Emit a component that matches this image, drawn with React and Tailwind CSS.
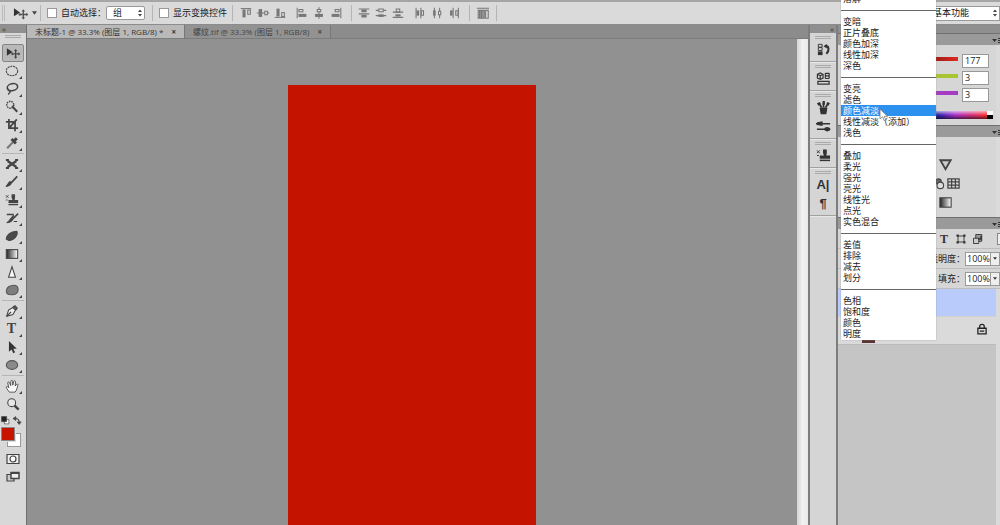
import { useState } from 'react';

const MODES = [
  ['溶解'],
  ['变暗', '正片叠底', '颜色加深', '线性加深', '深色'],
  ['变亮', '滤色', '颜色减淡', '线性减淡（添加）', '浅色'],
  ['叠加', '柔光', '强光', '亮光', '线性光', '点光', '实色混合'],
  ['差值', '排除', '减去', '划分'],
  ['色相', '饱和度', '颜色', '明度'],
];

const Icon = ({ children, className = 'size-4' }) => (
  <svg viewBox="0 0 16 16" className={className} fill="none" stroke="currentColor" strokeWidth="1.2">{children}</svg>
);

const moveIcon = (
  <>
    <path d="M1 2.500v8.500l6.500-4.200z" fill="#333" stroke="none" />
    <path d="M11 5v8M7 9h8" strokeWidth="1.5" />
    <path d="M11 3.500l1.900 2.300H9.100zM11 14.500l1.900-2.300H9.100zM5.500 9l2.300-1.900v3.800zM16.500 9l-2.300-1.900v3.800z" fill="currentColor" stroke="none" />
  </>
);

const stampIcon = (
  <>
    <path d="M1 2.500l3 3M4 2.500l-3 3M1 8h2" strokeWidth="1" />
    <path d="M7.500 1.500h4v4L11 8h4v3.500H4V8h4.500l-1-2.500z" fill="currentColor" stroke="none" />
    <path d="M4 13.200h11" strokeWidth="1.6" />
  </>
);

const TOOLS = [
  [
    { name: '移动', icon: moveIcon, active: true },
    { name: '椭圆选框', icon: <ellipse cx="8" cy="8" rx="6.500" ry="5.500" strokeDasharray="2.4 0.8" /> },
    { name: '套索', icon: <><ellipse cx="8.500" cy="6" rx="6" ry="4" strokeWidth="1.8" transform="rotate(-12 8 6)" /><path d="M4 8c-1 1 0 2.500 1.500 2S5.500 13 3.500 14" strokeWidth="1.6" /></> },
    { name: '快速选择', icon: <><circle cx="6" cy="5.500" r="4" strokeDasharray="1.8 1" strokeWidth="1.6" /><path d="M8 7l6 6.500" strokeWidth="2.4" /></> },
    { name: '裁剪', icon: <path d="M4.500 1v10.500h10.500M1 4.500h10.500V15M5 11l8.500-9.500" strokeWidth="2" /> },
    { name: '吸管', icon: <><path d="M9 7l-6.500 7" strokeWidth="2.400" stroke="#777" /><path d="M7.500 3.500l5 5M10 6l3.500-3.500" strokeWidth="3.4" /></> },
  ],
  [
    { name: '修复画笔', icon: <><path d="M3 4.500l10 7M3 11.500l10-7" strokeWidth="2.800" /><path d="M1 3.500h3.500M1 12.500h3.500M11.500 3.500H15M11.500 12.500H15" strokeWidth="2.2" /></> },
    { name: '画笔', icon: <><path d="M14 1.500L7 9" strokeWidth="2" /><path d="M7.500 8.500c-1 3-3 4.500-6.500 4.500 2-1 2.500-4 4.500-5.500z" fill="currentColor" /></> },
    { name: '仿制图章', icon: stampIcon },
    { name: '历史记录画笔', icon: <><path d="M2 4h8M10 5L6 10M15 3L9 9" strokeWidth="1.8" /><path d="M9 9c-1 3-3 4-7 4.500 2-1 3-3 4.500-4.500zM10 12h4" fill="currentColor" /></> },
    { name: '橡皮擦', icon: <path d="M1.500 11.500c0-4.500 5-9 12-9 2 4-3 10.500-9 10.500z" fill="#4a4a4a" /> },
    { name: '渐变', icon: <><defs><linearGradient id="toolRamp"><stop stopColor="#222" /><stop offset="1" stopColor="#fff" /></linearGradient></defs><rect x="1.500" y="3" width="13" height="10" fill="url(#toolRamp)" /></> },
    { name: '锐化', icon: <path d="M8 2l4 12H4z" fill="#f5f5f5" strokeWidth="1.2" /> },
    { name: '海绵', icon: <path d="M1.500 9c0-4 4-6.500 8.500-6.500 3 0 5 2 5 5 0 4-3 6-7.500 6s-6-1.500-6-4.500z" fill="#7d7d7d" stroke="#555" /> },
  ],
  [
    { name: '钢笔', icon: <><path d="M2 14l2-7 5-3 3 3-3 5z" fill="#eee" /><path d="M2 14l5-5M9.500 2.500l4 4" strokeWidth="1.4" /><path d="M9 4l2.500-2L14 4.500 12 7" fill="#555" /></> },
    { name: '文字', text: 'T' },
    { name: '路径选择', icon: <path d="M4.500 1v12.500l3-2.700 2 4.200 2-.9-2-4.100H13.500z" fill="#333" stroke="none" /> },
    { name: '椭圆', icon: <ellipse cx="8" cy="8" rx="6.500" ry="5" fill="#8a8a8a" stroke="#555" /> },
  ],
  [
    { name: '抓手', icon: <path d="M5 15C3 12 1 10 1.500 9s2-.2 3 1L3 4.500c.3-1.500 1.700-1.300 2.200 0L6.500 7.500l.1-5c.4-1.400 2-1.200 2.200 0V7l1.200-4.300c.7-1.200 2-.7 2 .5L11.700 8l1.500-2c1-.8 1.900-.2 1.500 1C14 9.500 13.500 13 11.500 15z" fill="#f8f8f8" strokeWidth="1" /> },
    { name: '缩放', icon: <><circle cx="6.500" cy="6.500" r="4.500" fill="#e8e8e8" /><path d="M9.800 9.800l4.700 4.700" strokeWidth="2.800" /></>, plain: true },
  ],
];

const ALIGN = [
  [
    { name: '顶对齐', icon: <><path d="M2 3h12" /><path d="M4 4h3.500v9H4z" fill="currentColor" stroke="none" /><path d="M10 4.500h3v5h-3z" /></> },
    { name: '垂直居中对齐', icon: <><path d="M1 8h14" /><path d="M3 3.500h4v9H3z" fill="currentColor" stroke="none" /><path d="M10 6h3v4h-3z" fill="#e0e0e0" /></> },
    { name: '底对齐', icon: <><path d="M2 13h12" /><path d="M4 3h3.500v9H4z" fill="currentColor" stroke="none" /><path d="M10 7.500h3V12h-3z" /></> },
  ],
  [
    { name: '左对齐', icon: <><path d="M2.500 2v12" /><path d="M4 9h9v3.500H4z" fill="currentColor" stroke="none" /><path d="M4.500 4H9v2.500H4.500z" /></> },
    { name: '水平居中对齐', icon: <><path d="M8 1.500v13" /><path d="M3.500 9h9v3.500h-9z" fill="currentColor" stroke="none" /><path d="M6 4h4v2.500H6z" fill="#e0e0e0" /></> },
    { name: '右对齐', icon: <><path d="M13.500 2v12" /><path d="M3 9h9v3.500H3z" fill="currentColor" stroke="none" /><path d="M7 4h4.500v2.500H7z" /></> },
  ],
  [
    { name: '按顶分布', icon: <><path d="M2 3.500h12M2 9h12" /><path d="M5 4h6v3H5zM5 10h6v3H5z" fill="currentColor" stroke="none" /></> },
    { name: '垂直居中分布', icon: <><path d="M2 5h12M2 11h12" /><path d="M5.500 3.500h5v3h-5z" fill="#e0e0e0" /><path d="M5 9.500h6v3H5z" fill="currentColor" stroke="none" /></> },
    { name: '按底分布', icon: <><path d="M2 7h12M2 13h12" /><path d="M6 3.500h4V7H6z" /><path d="M5 9.500h6V12H5z" fill="currentColor" stroke="none" /></> },
  ],
  [
    { name: '按左分布', icon: <><path d="M3.500 2v12M9 2v12" /><path d="M4 5h3v6H4z" fill="currentColor" stroke="none" /><path d="M9.500 5.500H12v5H9.500z" /></> },
    { name: '水平居中分布', icon: <><path d="M5 2v12M11 2v12" /><path d="M3.500 5h3v6h-3z" fill="currentColor" stroke="none" /><path d="M9.700 6h2.600v4H9.700z" fill="#e0e0e0" /></> },
    { name: '按右分布', icon: <><path d="M7 2v12M13 2v12" /><path d="M3.500 5h3v6h-3z" fill="currentColor" stroke="none" /><path d="M10 5.500h2.500v5H10z" /></> },
  ],
];

const DOCK = [
  [{ name: '历史记录', icon: <><path d="M2.500 2.500h4v3h-4zM2.500 6h4v3h-4z" strokeWidth="1" /><path d="M2 10h5v4H2z" fill="currentColor" stroke="none" /><path d="M10 4c4 0 4.500 5 1 8.500" strokeWidth="2.2" /><path d="M8 4.500L11.500 2v5z" fill="currentColor" stroke="none" /></> }],
  [{ name: '属性', icon: <><path d="M1.500 3.500l3-1.500 3 1.500v4l-3 1.500-3-1.500zM1.500 3.500l3 1.500 3-1.500M4.500 5v4" strokeWidth="1.3" /><path d="M10 2.500h4M10 5.200h4M10 8h4M10 2v6M14 2v6M2 11h12v3H2z" strokeWidth="1.3" /></> }],
  [
    { name: '画笔预设', icon: <><path d="M4.500 8.500h7l-1 6h-5z" fill="currentColor" /><path d="M6 8L3.500 4M8 8V3M10 8l3-4" strokeWidth="1.8" /><path d="M7 1h2.500v4H7zM12 2l3 1.500-2 2.500-2-1.500zM1 3.500L4 2l1.500 2.500-3 1.500z" fill="currentColor" stroke="none" /></> },
    { name: '画笔', icon: <><path d="M0 5h15M1 11h14" strokeWidth="1.5" /><path d="M1 3.500l6-1v5L1 6.500zM9 9.500c2-1.500 5.500-1.500 6.500 1.500-1 2.500-4.500 3-6.500 1z" fill="currentColor" stroke="none" /></> },
  ],
  [{ name: '仿制源', icon: stampIcon }],
  [
    { name: '字符', text: 'A|' },
    { name: '段落', text: '¶' },
  ],
];

const Arrows = () => (
  <svg viewBox="0 0 6 8" className="h-2 w-1.5 pointer-events-none -ml-2" fill="#444">
    <path d="M3 0.500l2 2.500H1zM3 7.500l2-2.500H1z" />
  </svg>
);

const Divider = () => <span className="w-px h-4 bg-[#b4b4b4] shrink-0" />;

const Grip = () => <span className="w-4 h-[3px] border-y border-[#aaa] shrink-0" />;

function OptionsBar() {
  return (
    <header className="flex items-center h-[25px] shrink-0 bg-[#dadada] border-t-2 border-[#a5a5a5] border-b border-b-[#8c8c8c] text-[#222]">
      <span className="w-[3px] h-4 ml-0.5 border-x border-[#bbb]" />
      <button aria-label="移动工具" className="flex items-center gap-1 ml-2 w-[27px]">
        <Icon className="size-[15px] shrink-0 text-[#555]">{moveIcon}</Icon>
        <svg viewBox="0 0 6 4" className="w-[5px] h-1 shrink-0" fill="#444"><path d="M0 0h6L3 4z" /></svg>
      </button>
      <Divider />
      <label className="flex items-center gap-1 ml-1.5 w-[59px] whitespace-nowrap">
        <input type="checkbox" className="appearance-none size-[10px] bg-white border border-[#999] shrink-0" />
        自动选择：
      </label>
      <div className="flex items-center w-[39px]">
        <select aria-label="自动选择对象" className="appearance-none w-full h-[14px] pl-1.5 leading-3 bg-white border border-[#999] rounded-[2px]">
          <option>组</option>
          <option>图层</option>
        </select>
        <Arrows />
      </div>
      <span className="w-[7px]" />
      <Divider />
      <label className="flex items-center gap-1 ml-1.5 w-[73px] whitespace-nowrap">
        <input type="checkbox" className="appearance-none size-[10px] bg-white border border-[#999] shrink-0" />
        显示变换控件
      </label>
      <Divider />
      {ALIGN.map((group, i) => (
        <div key={i} className={`flex items-center gap-[3px] text-[#777] ${i ? 'ml-2' : 'ml-1.5'}`}>
          {i === 2 && <span className="mr-0.5 flex"><Divider /></span>}
          {group.map((a) => (
            <button key={a.name} aria-label={a.name}><Icon className="size-[14px]">{a.icon}</Icon></button>
          ))}
        </div>
      ))}
      <span className="w-2" />
      <Divider />
      <button aria-label="自动对齐图层" className="mx-1.5 text-[#777]">
        <Icon className="size-[14px]"><path d="M1 2.500h14M2.500 5h3v9h-3zM6.500 5h3v9h-3zM11 5h3v9h-3zM4 5v9M8 5v9" /></Icon>
      </button>
      <Divider />
      <div className="flex items-center ml-auto w-[72px] shrink-0">
        <select aria-label="工作区" className="appearance-none w-full h-[15px] pl-1 leading-3 text-[#111] bg-white border border-[#999]">
          <option>基本功能</option>
        </select>
        <Arrows />
      </div>
    </header>
  );
}

function Toolbar() {
  return (
    <nav className="flex flex-col items-center w-[26px] shrink-0 bg-[#d8d8d8] text-[#444]">
      <div className="self-stretch h-2 pl-0.5 bg-[#909090] text-[8px] leading-[7px] text-[#333]">»</div>
      <div className="flex flex-col items-center h-[11px] pt-0.5 shrink-0"><Grip /></div>
      {TOOLS.map((group, i) => (
        <div key={i} className={i ? 'mt-px pt-px border-t border-[#b5b5b5]' : ''}>
          {group.map((tool) => (
            <button key={tool.name} aria-label={tool.name}
              className={`flex items-center justify-center w-[22px] h-[18px] ${tool.active ? 'bg-[#b9b9b9] border border-[#858585] rounded-[2px]' : ''}`}>
              {tool.text
                ? <span className="w-[14px] font-['Liberation_Serif',serif] font-bold text-[14px] leading-4">{tool.text}</span>
                : <Icon className="size-[14px] shrink-0">{tool.icon}</Icon>}
              {!tool.active && !tool.plain && (
                <svg viewBox="0 0 3 3" className="size-[3px] self-end mb-px shrink-0" fill="#444"><path d="M3 0v3H0z" /></svg>
              )}
            </button>
          ))}
        </div>
      ))}
      <div className="flex items-center justify-between self-stretch h-[14px] px-px pr-1 shrink-0">
        <button aria-label="默认颜色"><Icon className="size-[9px]"><path d="M6 6h8v8H6z" fill="#fff" /><path d="M1 1h9v9H1z" fill="#222" /></Icon></button>
        <button aria-label="切换颜色"><Icon className="size-[9px]"><path d="M4 4.500c5 0 7 2 7 7" strokeWidth="2" /><path d="M0 4.500L5 1v7zM11 15l-3.500-4.500h7z" fill="currentColor" /></Icon></button>
      </div>
      <div className="grid self-stretch h-[22px] px-px shrink-0">
        <button aria-label="前景色" className="col-start-1 row-start-1 z-10 size-[14px] bg-[#c61400] border border-[#888] outline outline-[#ddd]" />
        <button aria-label="背景色" className="col-start-1 row-start-1 size-[14px] mt-1.5 ml-1.5 bg-white border border-[#999]" />
      </div>
      <button aria-label="快速蒙版" className="mt-0.5 shrink-0">
        <Icon className="size-4"><path d="M2 3.500h12v9H2z" fill="#eee" /><circle cx="8" cy="8" r="3" fill="#fff" /></Icon>
      </button>
      <button aria-label="屏幕模式" className="mt-0.5 shrink-0">
        <Icon className="size-4"><path d="M2 5.500h7V12H2z" fill="#ccc" /><path d="M6 3.500h8v6H6z" fill="#eee" strokeWidth="1.500" /><path d="M6 4h8" strokeWidth="2" /></Icon>
      </button>
    </nav>
  );
}

function Tab({ title, active }) {
  return (
    <div className={`flex items-center gap-2 px-2 whitespace-nowrap border-r border-[#777] ${active ? 'bg-[#b9b9b9] text-[#333]' : 'bg-[#929292] text-[#444]'}`}>
      <button className="leading-3">{title}</button>
      <button aria-label="关闭" className="leading-3 font-bold">×</button>
    </div>
  );
}

function Workspace() {
  return (
    <main className="flex flex-col flex-1 min-w-0 border-l border-[#707070]">
      <div className="flex h-[14px] shrink-0 bg-[#8c8c8c] border-b border-[#7c7c7c] text-[8px]">
        <Tab title="未标题-1 @ 33.3% (图层 1, RGB/8) *" active />
        <Tab title="螺纹.tif @ 33.3% (图层 1, RGB/8)" />
      </div>
      <div className="flex flex-1 min-h-0">
        <div className="flex flex-1 justify-center pt-[46px] bg-[#919191]">
          <div className="w-[248px] bg-[#c41400]" />
        </div>
        <div className="w-[11px] bg-linear-to-r from-[#d4d4d4] via-[#f2f2f2] to-[#e9e9e9]" />
      </div>
    </main>
  );
}

function Dock() {
  return (
    <aside className="flex flex-col w-[30px] shrink-0 bg-[#d5d5d5] border-x-2 border-[#7d7d7d] text-[#333]">
      <div className="h-2 pr-0.5 bg-[#8f8f8f] text-[8px] leading-[7px] text-right">«</div>
      {DOCK.map((group, i) => (
        <div key={i} className="flex flex-col items-center pt-[3px] pb-0.5 border-b border-[#a2a2a2] shadow-[0_1px_0_#e8e8e8]">
          <Grip />
          {group.map((item) => (
            <button key={item.name} aria-label={item.name} className="flex items-center mt-0.5 h-[17px] last:mb-px">
              {item.text
                ? <span className="font-['Liberation_Sans',sans-serif] font-bold text-[13px] leading-4">{item.text}</span>
                : <Icon className="size-[15px]">{item.icon}</Icon>}
            </button>
          ))}
        </div>
      ))}
    </aside>
  );
}

const PanelHead = () => (
  <div className="flex items-center justify-end h-3 -mr-1 shrink-0 bg-[#9a9a9a] border-t border-[#6f6f6f]">
    <button aria-label="面板菜单">
      <svg viewBox="0 0 8 6" className="w-2 h-1.5" fill="#333"><path d="M0 2h5L2.500 5zM6 1h2v1H6zM6 3h2v1H6zM6 5h2v1H6z" /></svg>
    </button>
  </div>
);

function ColorRow({ label, value, track }) {
  return (
    <div className="flex items-center gap-1 h-[17px]">
      <input type="range" min="0" max="255" defaultValue={value} aria-label={label}
        className={`appearance-none flex-1 min-w-0 h-1 mb-1 [&::-webkit-slider-thumb]:appearance-none ${track}`} />
      <input type="text" defaultValue={value} aria-label={`${label} 值`} className="w-[27px] h-[14px] pl-0.5 bg-white border border-[#999]" />
    </div>
  );
}

function PercentRow({ label }) {
  return (
    <div className="flex items-center justify-end h-5 border-b border-[#bdbdbd]">
      <label className="flex items-center whitespace-nowrap">
        {label}：
        <input type="text" defaultValue="100%" className="w-[26px] h-[14px] pl-px bg-white border border-[#999]" />
      </label>
      <button aria-label={`${label}选项`} className="flex items-center justify-center w-[9px] h-[14px] bg-[#eee] border border-l-0 border-[#999]">
        <svg viewBox="0 0 6 4" className="w-1 h-[3px]" fill="#333"><path d="M0 0h6L3 4z" /></svg>
      </button>
    </div>
  );
}

function Panels() {
  return (
    <aside className="flex flex-col w-[162px] shrink-0 bg-[#c5c5c5] border-r-4 border-[#dadada] text-[#222]">
      <div className="h-2 -mr-1 shrink-0 bg-[#8f8f8f]" />
      <PanelHead />
      <section className="h-[80px] shrink-0 pt-[7px] pl-4 pr-[7px] bg-[#d6d6d6]">
        <ColorRow label="R" value="177" track="bg-linear-to-r from-black to-[#e02a20]" />
        <ColorRow label="G" value="3" track="bg-linear-to-r from-[#b10303] via-[#a9c431] via-80% to-[#a9c431]" />
        <ColorRow label="B" value="3" track="bg-linear-to-r from-[#b10303] via-[#a43cc4] via-80% to-[#a43cc4]" />
        <div className="flex h-2 mt-2 -mr-1">
          <button aria-label="色谱" className="flex-1 bg-[linear-gradient(to_bottom,#fff9,transparent_50%,#0009),linear-gradient(to_right,#f00,#ff0,#0c0,#0cc,#22a_62%,#a3c_76%,#f33)]" />
          <div className="flex flex-col w-1.5">
            <button aria-label="白色" className="flex-1 bg-white" />
            <button aria-label="黑色" className="flex-1 bg-black" />
          </div>
        </div>
      </section>
      <PanelHead />
      <section className="flex flex-col items-end gap-1 h-[80px] shrink-0 pt-5 pr-[35px] bg-[#d6d6d6] text-[#444]">
        <button aria-label="自然饱和度" className="mr-2"><Icon className="size-[15px]"><path d="M2.500 3.500h11L8 13z" fill="#ccc" strokeWidth="2" /></Icon></button>
        <div className="flex gap-px">
          <button aria-label="照片滤镜"><Icon className="size-[15px]"><circle cx="9" cy="6" r="3" fill="#666" /><circle cx="11" cy="10" r="3.500" fill="#ddd" /></Icon></button>
          <button aria-label="颜色查找"><Icon className="size-[15px]"><path d="M2 3h12v10H2zM2 6.300h12M2 9.700h12M6 3v10M10 3v10" strokeWidth="1.3" /></Icon></button>
        </div>
        <button aria-label="渐变映射" className="mr-2"><Icon className="size-[15px]"><rect x="2" y="3" width="12" height="10" fill="url(#toolRamp)" /></Icon></button>
      </section>
      <PanelHead />
      <section className="shrink-0 -mr-1 bg-[#d6d6d6]">
        <div className="flex items-center justify-end gap-[5px] h-5 border-b border-[#bdbdbd] text-[#333]">
          <button aria-label="文字图层过滤器" className="w-3 font-['Liberation_Serif',serif] font-bold text-[12px]">T</button>
          <button aria-label="形状图层过滤器"><Icon className="size-3"><path d="M4 4h8v8H4z" /><path d="M2 2h3v3H2zM11 2h3v3h-3zM2 11h3v3H2zM11 11h3v3h-3z" fill="currentColor" stroke="none" /></Icon></button>
          <button aria-label="智能对象过滤器" className="mr-2"><Icon className="size-3"><path d="M5 2h8v9H5z" fill="#999" /><path d="M2 7h7v7H2z" fill="#ccc" /><path d="M8 8h4V4" strokeWidth="2" /></Icon></button>
          <button aria-label="图层过滤开关" className="w-[3px] h-3 bg-[#eee] border border-r-0 border-[#888]" />
        </div>
        <PercentRow label="不透明度" />
        <PercentRow label="填充" />
      </section>
      <button aria-label="图层 1" className="h-[28px] shrink-0 bg-[#b8cbfb] border-b border-[#d0d0d0]" />
      <div className="flex items-end justify-between h-[28px] shrink-0 pl-6 pb-px pr-2 bg-[#dadada] border-b border-[#bbb]">
        <span className="w-[13px] h-[22px] bg-[#5a3533]" />
        <Icon className="size-3 mb-2"><path d="M2.500 7h11v7.500h-11zM5 7V4.500c0-3.500 6-3.500 6 0V7M5 10.700h6" strokeWidth="1.700" /></Icon>
      </div>
    </aside>
  );
}

function BlendMenu({ value, onPick }) {
  return (
    <div role="menu" className="absolute right-16 -top-[7px] z-20 w-[95px] pb-px bg-white text-[#222] shadow-[0_0_1px_#888]">
      {MODES.map((group, i) => (
        <div key={i}>
          {i > 0 && <div className="h-3 pt-1.5"><div className="h-px bg-[#666]" /></div>}
          {group.map((mode) => (
            <button key={mode} role="menuitem" onClick={() => onPick(mode)}
              className={`block w-full h-[11px] pl-0.5 text-left leading-[11px] whitespace-nowrap ${mode === value ? 'bg-[#2b90ee] text-white' : ''}`}>
              {mode}
            </button>
          ))}
        </div>
      ))}
      <svg viewBox="0 0 10 14" className="absolute left-[38px] top-[115px] w-2.5 h-3.5 pointer-events-none" fill="#fff" stroke="#777" strokeWidth="0.8">
        <path d="M1 1v10l2.500-2.300 1.700 4 1.600-.7-1.600-3.700H8.500z" />
      </svg>
    </div>
  );
}

export default function App() {
  const [mode, setMode] = useState('颜色减淡');

  return (
    <div className="relative flex flex-col h-screen overflow-hidden bg-[#919191] font-['Open_Sans','Noto_Sans_CJK_SC',sans-serif] text-[9px] leading-3 select-none">
      <OptionsBar />
      <div className="flex flex-1 min-h-0">
        <Toolbar />
        <Workspace />
        <Dock />
        <Panels />
      </div>
      <BlendMenu value={mode} onPick={setMode} />
    </div>
  );
}
